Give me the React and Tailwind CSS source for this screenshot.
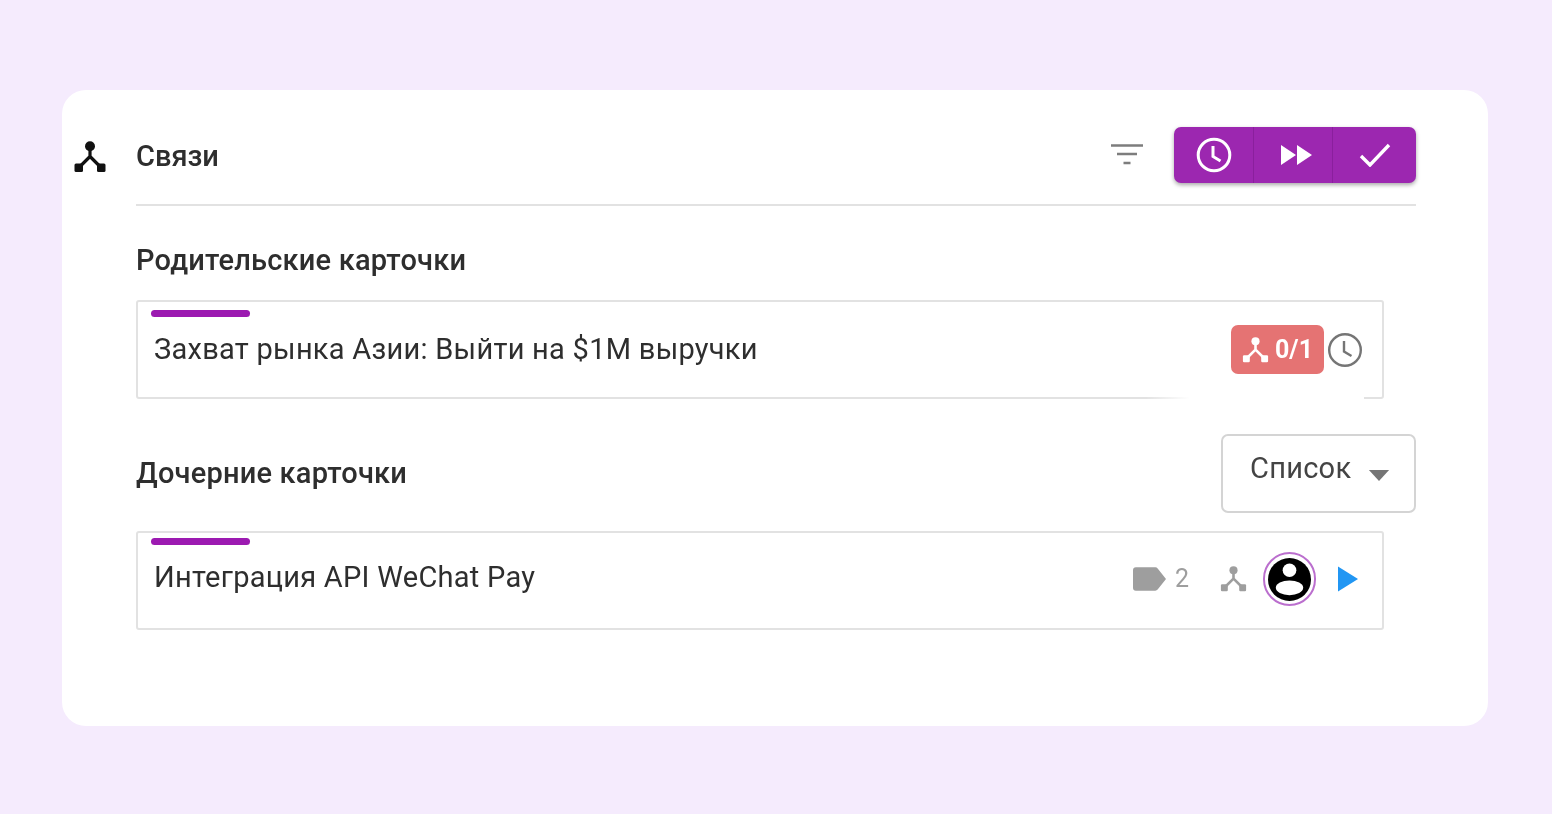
const font = { fontFamily: "Roboto, 'Noto Sans', sans-serif" };

function Hub({ className, fill = "currentColor" }) {
  return (
    <svg viewBox="0 0 32 32" className={className} fill="none">
      <circle cx="16" cy="5.2" r="5" fill={fill} />
      <rect x="0.5" y="22.5" width="8.5" height="8.5" rx="1.5" fill={fill} />
      <rect x="23" y="22.5" width="8.5" height="8.5" rx="1.5" fill={fill} />
      <path d="M16 8v7.5M16 15.5L5 26.5M16 15.5l11 11" stroke={fill} strokeWidth="3.2" />
    </svg>
  );
}

function Clock({ className, sw = 2.4 }) {
  return (
    <svg viewBox="0 0 36 36" className={className} fill="none" stroke="currentColor" strokeWidth={sw}>
      <circle cx="18" cy="18" r="15.8" />
      <path d="M17 9v10.5l7.5 4.5" />
    </svg>
  );
}

function Card({ title, barClass, textClass, children }) {
  return (
    <div className="relative flex h-[99px] w-[1248px] items-start justify-between rounded-[3px] border-2 border-[#e2e2e2] bg-white pl-4">
      <div className={"absolute left-[13px] h-[7px] w-[99px] rounded-full bg-[#9c1ab1] " + barClass} />
      <div className={"text-[29px] leading-[36px] tracking-[0.27px] text-[#2e2e2e] " + textClass}>{title}</div>
      {children}
    </div>
  );
}

export default function App() {
  return (
    <div style={font} className="h-[814px] w-[1552px] bg-[#f5ebfd] pl-[62px] pt-[90px]">
      <div className="h-[636px] w-[1426px] rounded-[24px] bg-white pl-3 pr-[72px] pt-[37px] blur-[0.5px]">
        <div className="flex h-[56px] items-center">
          <Hub className="mt-[3px] h-[32px] w-[32px] text-[#111111]" />
          <div className="ml-[30px] pt-[3px] text-[29px] font-medium text-[#2e2e2e]">Связи</div>
          <div className="ml-auto flex items-center gap-[31px]">
            <svg viewBox="0 0 32 24" className="h-[24px] w-[32px]" fill="none" stroke="#7d7d7d" strokeWidth="2.6">
              <path d="M0 2.5h32M6 11h20M12.5 20h7" />
            </svg>
            <div className="flex h-[56px] w-[242px] overflow-hidden rounded-[7px] bg-[#9c27b0] text-white shadow-[0_2px_4px_rgba(0,0,0,0.35)]">
              <div className="flex w-[80px] items-center justify-center border-r border-[#8a1f9d]">
                <Clock className="h-[36px] w-[36px]" sw={3} />
              </div>
              <div className="flex w-[79px] items-center justify-center border-r border-[#8a1f9d] pl-[5px]">
                <svg viewBox="0 0 32 22" className="h-[22px] w-[32px]" fill="white">
                  <path d="M1 1l15 10L1 21zM17 1l15 10-15 10z" />
                </svg>
              </div>
              <div className="flex flex-1 items-center justify-center">
                <svg viewBox="0 0 32 24" className="h-[24px] w-[32px]" fill="none" stroke="white" strokeWidth="3.4">
                  <path d="M2 13l9 9L30 2" />
                </svg>
              </div>
            </div>
          </div>
        </div>
        <div className="ml-[62px] mt-[21px] h-[2px] bg-[#e2e2e2]" />
        <div className="ml-[62px]">
          <div className="mt-[36px] text-[29px] font-medium leading-[36px] tracking-[0.2px] text-[#2e2e2e]">Родительские карточки</div>
          <div className="mt-[22px]">
            <Card title="Захват рынка Азии: Выйти на $1M выручки" barClass="top-[8px]" textClass="pt-[29px]">
              <div className="flex items-center gap-[3px] pr-[19px] pt-[23px]">
                <div className="flex h-[49px] w-[93px] items-center justify-center gap-[6px] rounded-[7px] bg-[#e57373] text-[25px] font-bold text-white">
                  <Hub className="h-[26px] w-[27px]" />
                  <span>0/1</span>
                </div>
                <Clock className="h-[36px] w-[36px] text-[#757575]" />
              </div>
              <div className="absolute bottom-[-2px] left-[1008px] h-[2px] w-[218px] bg-[linear-gradient(to_right,transparent,white_20%)]" />
            </Card>
          </div>
          <div className="mt-[35px] flex h-[79px] items-center justify-between">
            <div className="text-[29px] font-medium tracking-[0.2px] text-[#2e2e2e]">Дочерние карточки</div>
            <div className="flex h-[79px] w-[195px] items-start rounded-[7px] border-2 border-[#d4d4d4] pl-[27px] pr-[24px] pt-[14px]">
              <span className="text-[29px] leading-[36px] tracking-[0.27px] text-[#444444]">Список</span>
              <svg viewBox="0 0 22 12" className="ml-auto mt-[20px] h-[11px] w-[22px]" fill="#757575">
                <path d="M0 0h22L11 12z" />
              </svg>
            </div>
          </div>
          <div className="mt-[18px]">
            <Card title="Интеграция API WeChat Pay" barClass="top-[5px]" textClass="pt-[26px]">
              <div className="flex items-center pr-[23px] pt-[19px]">
                <svg viewBox="0 0 34 24" className="h-[24px] w-[33px]" fill="#9e9e9e">
                  <path d="M3 0h20a3 3 0 0 1 2.4 1.2L34 12l-8.6 10.8A3 3 0 0 1 23 24H3a3 3 0 0 1-3-3V3a3 3 0 0 1 3-3z" />
                </svg>
                <span className="ml-[9px] text-[25px] text-[#9e9e9e]">2</span>
                <Hub className="ml-[31px] h-[26px] w-[27px] text-[#9e9e9e]" />
                <div className="ml-[16px] flex h-[54px] w-[53px] items-center justify-center rounded-full border-2 border-[#bb6fce] bg-white">
                  <svg viewBox="0 0 44 44" className="h-[43px] w-[43px]">
                    <circle cx="22" cy="22" r="22" fill="#000" />
                    <circle cx="22" cy="12.5" r="7" fill="#fff" />
                    <ellipse cx="22" cy="30.5" rx="14" ry="7.5" fill="#fff" />
                  </svg>
                </div>
                <svg viewBox="0 0 22 26" className="ml-[22px] h-[26px] w-[21px]" fill="#2196f3">
                  <path d="M0 0l21 13L0 26z" />
                </svg>
              </div>
            </Card>
          </div>
        </div>
      </div>
    </div>
  );
}
